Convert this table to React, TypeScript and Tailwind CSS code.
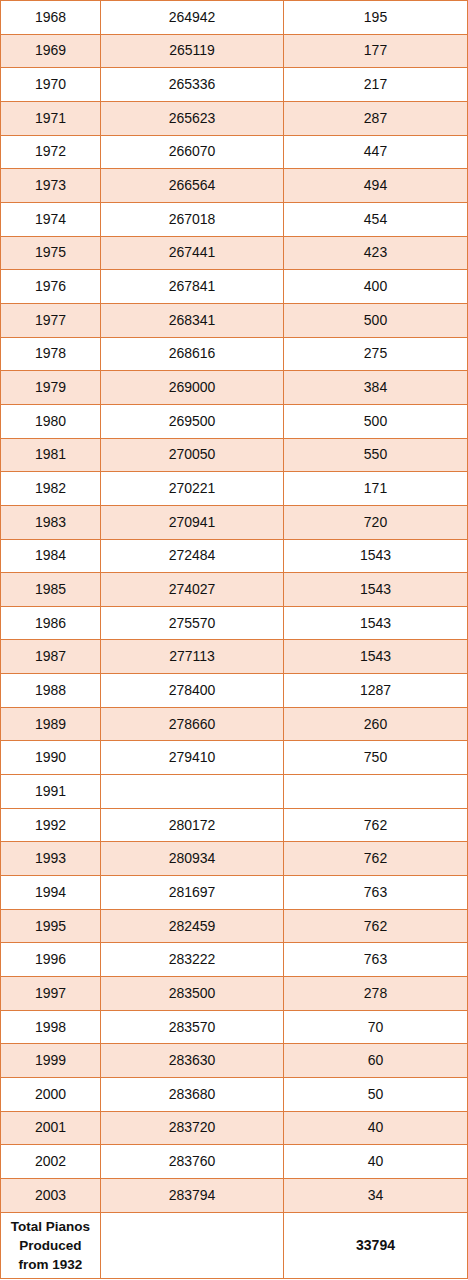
import React from "react"

const rows: [string, string, string][] = [
    ["1968", "264942", "195"],
    ["1969", "265119", "177"],
    ["1970", "265336", "217"],
    ["1971", "265623", "287"],
    ["1972", "266070", "447"],
    ["1973", "266564", "494"],
    ["1974", "267018", "454"],
    ["1975", "267441", "423"],
    ["1976", "267841", "400"],
    ["1977", "268341", "500"],
    ["1978", "268616", "275"],
    ["1979", "269000", "384"],
    ["1980", "269500", "500"],
    ["1981", "270050", "550"],
    ["1982", "270221", "171"],
    ["1983", "270941", "720"],
    ["1984", "272484", "1543"],
    ["1985", "274027", "1543"],
    ["1986", "275570", "1543"],
    ["1987", "277113", "1543"],
    ["1988", "278400", "1287"],
    ["1989", "278660", "260"],
    ["1990", "279410", "750"],
    ["1991", "", ""],
    ["1992", "280172", "762"],
    ["1993", "280934", "762"],
    ["1994", "281697", "763"],
    ["1995", "282459", "762"],
    ["1996", "283222", "763"],
    ["1997", "283500", "278"],
    ["1998", "283570", "70"],
    ["1999", "283630", "60"],
    ["2000", "283680", "50"],
    ["2001", "283720", "40"],
    ["2002", "283760", "40"],
    ["2003", "283794", "34"],
]

// 1991 breaks the banding in the source, so shading is keyed on the year
const shaded = (year: string) => year !== "1991" && Number(year) % 2 === 1

export default function App() {
    return (
        <div className="w-[468px] h-[1280px] bg-white font-['Liberation_Sans',Arial,sans-serif] text-[14px] text-[#111]">
            <table className="border-collapse w-[467px] table-fixed">
                <colgroup>
                    <col className="w-[100px]" />
                    <col className="w-[183px]" />
                    <col className="w-[184px]" />
                </colgroup>
                <tbody>
                    {rows.map(([year, serial, count]) => (
                        <tr key={year} className={shaded(year) ? "bg-[#fbe2d5]" : "bg-white"}>
                            <td className="border border-[#de7c3e] h-[33.67px] p-0 text-center align-middle">{year}</td>
                            <td className="border border-[#de7c3e] h-[33.67px] p-0 text-center align-middle">{serial}</td>
                            <td className="border border-[#de7c3e] h-[33.67px] p-0 text-center align-middle">{count}</td>
                        </tr>
                    ))}
                    <tr className="bg-white">
                        <td className="border border-[#de7c3e] h-[66px] p-0 text-center align-middle font-bold text-[13.5px] leading-[19px]">
                            Total Pianos
                            <br />
                            Produced
                            <br />
                            from 1932
                        </td>
                        <td className="border border-[#de7c3e] h-[66px] p-0" />
                        <td className="border border-[#de7c3e] h-[66px] p-0 text-center align-middle font-bold">33794</td>
                    </tr>
                </tbody>
            </table>
        </div>
    )
}
